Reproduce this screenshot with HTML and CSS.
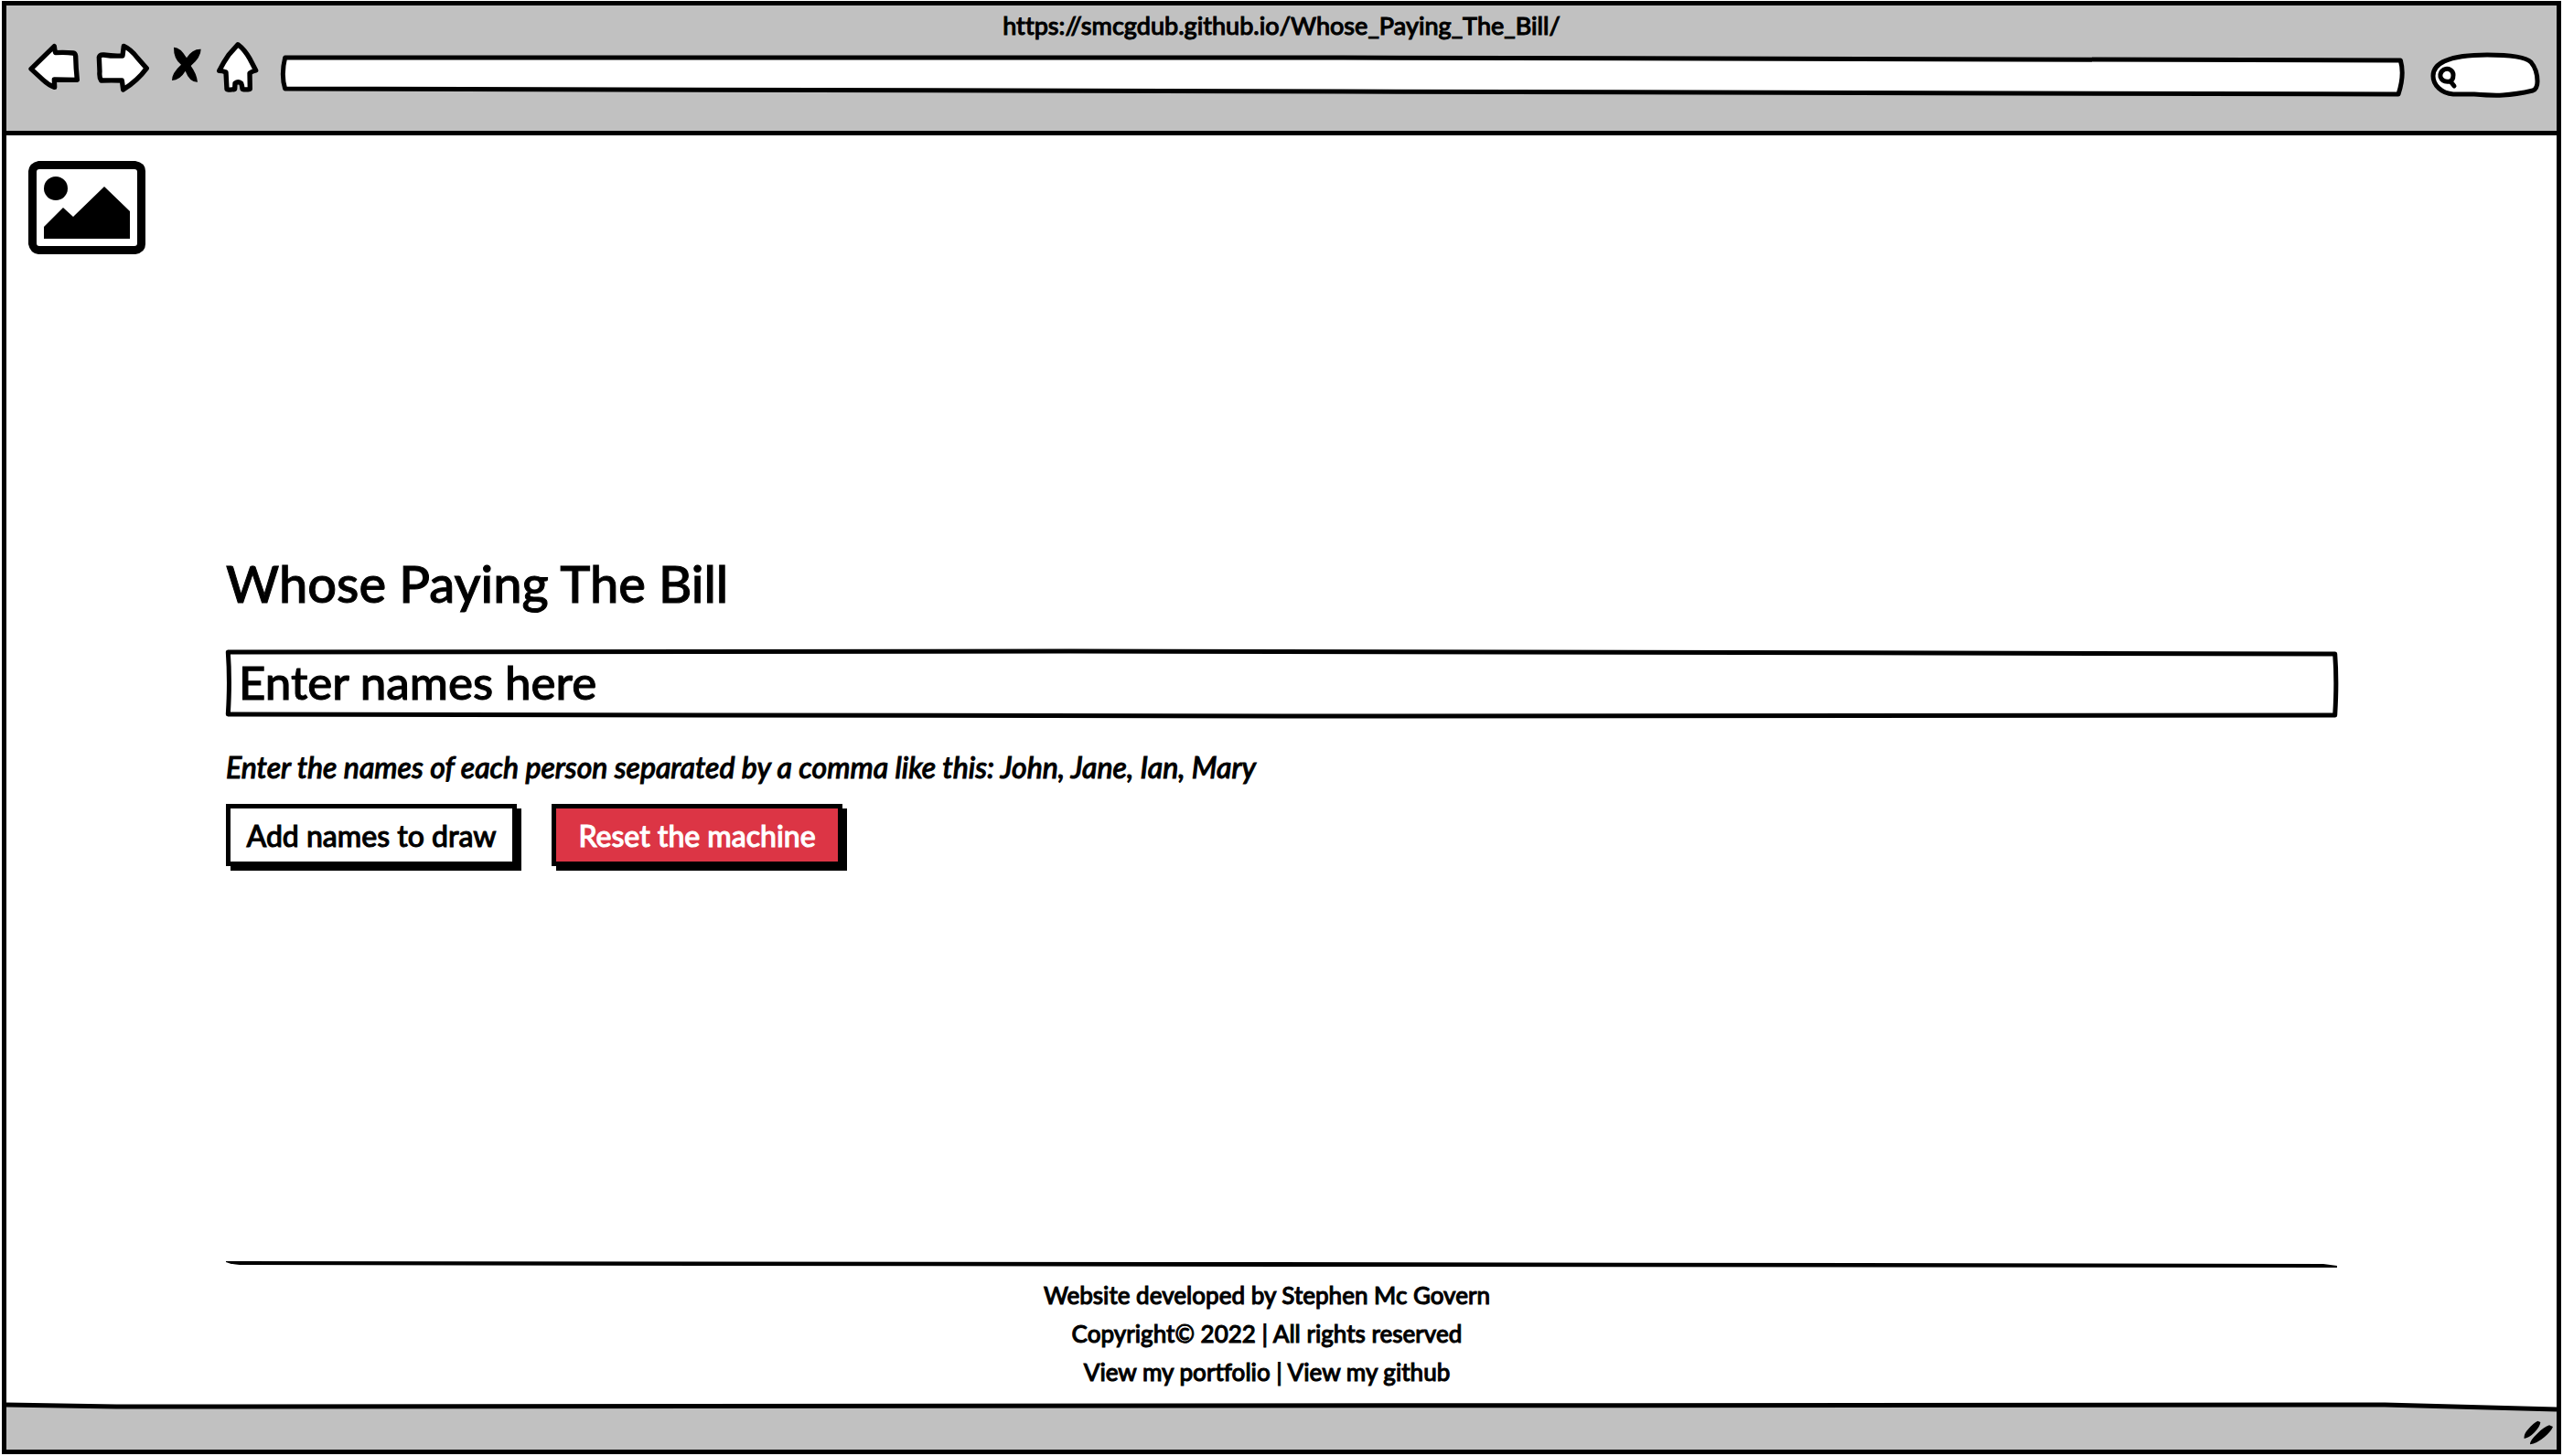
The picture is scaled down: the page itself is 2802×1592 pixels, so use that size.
FILE: index.html
```html
<!DOCTYPE html>
<html lang="en">
<head>
<meta charset="utf-8">
<meta name="viewport" content="width=device-width, initial-scale=1">
<title>Whose Paying The Bill</title>
<link rel="stylesheet" href="styles.css">
</head>
<body>
<div class="browser">
  <header class="chrome">
    <p class="page-url">https://smcgdub.github.io/Whose_Paying_The_Bill/</p>
    <div class="toolbar">
      <button class="tool tool-back" type="button" aria-label="Back">
        <svg width="56" height="56" viewBox="93 135 168 168"><path class="ink" d="M102 226 178 152Q179 164 182 173Q212 171 240 174Q247 175 248 184Q249 225 253 262Q218 261 178 261L179 286Q160 280 142 263Z"/></svg>
      </button>
      <button class="tool tool-forward" type="button" aria-label="Forward">
        <svg width="58" height="56" viewBox="315 135 174 168"><path class="ink" d="M325 188Q327 179 340 180Q372 185 402 183L406 151Q430 162 450 189L481 224Q450 266 404 294L400 264Q365 263 332 264Q325 255 327 235Z"/></svg>
      </button>
      <button class="tool tool-stop" type="button" aria-label="Stop">
        <svg width="33" height="56" viewBox="561 135 99 168"><path d="M570 155Q592 155 612 190Q630 160 659 161Q659 188 626 216Q645 242 648 269Q622 270 608 233Q590 263 564 264Q563 240 594 212Q569 193 570 155Z"/></svg>
      </button>
      <button class="tool tool-home" type="button" aria-label="Home">
        <svg width="46" height="56" viewBox="711 135 138 168"><path class="ink" d="M780 146Q802 162 820 194L839 231Q826 234 819 240L820 292Q805 295 795 292Q794 280 791 273Q781 265 771 273L770 292Q757 296 744 293L741 237Q730 232 719 232Q732 206 750 180Z"/></svg>
      </button>
      <div class="sketch address">
        <svg class="outline" viewBox="0 0 1000 46" preserveAspectRatio="none" aria-hidden="true"><path d="M2 3 500 3 998 6Q1000 22 997 43L500 40 2 37Q0 22 2 3Z"/></svg>
        <input class="field" type="text" aria-label="Address">
      </div>
      <div class="sketch search">
        <svg class="outline" viewBox="0 0 120 50" preserveAspectRatio="none" aria-hidden="true"><path d="M25 46C12 45 3 36 3 26C3 14 16 3 62 3C88 3 104 5 110 11C115 17 117 25 117 32Q117 40 112 42C86 48 72 48 48 46Z"/><path d="M15 19C20 17 25 20 25 25Q25 31 21 32Q13 33 11 27Q10 22 15 19ZM22 32 26 37"/></svg>
        <input class="field" type="search" aria-label="Search">
      </div>
    </div>
  </header>
  <div class="page">
    <svg class="logo" width="128" height="102" viewBox="0 0 128 102" role="img" aria-label="Logo"><path fill-rule="evenodd" d="M11 0H117Q128 2 128 11V91Q128 100 117 102H11Q2 101 0 91V11Q1 2 11 0ZM12 9Q9 9 9 12V90Q9 93 12 93H116Q119 93 119 90V12Q119 9 116 9Z"/><circle cx="30" cy="30" r="13"/><path d="M17 72 38 51 49 61 83 28 111 55V85H17Z"/></svg>
    <main class="content">
      <h1 class="title">Whose Paying The Bill</h1>
      <form class="draw">
        <div class="sketch names">
          <svg class="outline" viewBox="0 0 1000 75" preserveAspectRatio="none" aria-hidden="true"><path d="M1 3 400 2 999 5Q1000 35 999 72L500 73 1 71Q2 35 1 3Z"/></svg>
          <input class="field" type="text" placeholder="Enter names here" aria-label="Names" aria-describedby="hint">
        </div>
        <p class="hint" id="hint">Enter the names of each person separated by a comma like this: John, Jane, Ian, Mary</p>
        <div class="actions">
          <button class="action" type="button">Add names to draw</button>
          <button class="action action-reset" type="reset">Reset the machine</button>
        </div>
      </form>
    </main>
    <footer class="footer">
      <svg class="rule" viewBox="0 0 2309 8" preserveAspectRatio="none" aria-hidden="true"><path d="M0 0 1150 1 2294 3 2309 5V7L1150 6 15 4Q4 3 0 1Z"/></svg>
      <p>Website developed by Stephen Mc Govern</p>
      <p>Copyright© 2022 | All rights reserved</p>
      <p><a href="#portfolio">View my portfolio</a> | <a href="#github">View my github</a></p>
    </footer>
  </div>
  <div class="status">
    <svg class="status-edge" viewBox="0 0 2788 52" preserveAspectRatio="none" aria-hidden="true"><path class="fill" d="M0 3 120 5 2600 3 2788 8V52H0Z"/><path class="line" d="M0 3 120 5 2600 3 2788 8"/></svg>
    <svg class="grip" width="34" height="28" viewBox="776 580 102 84" aria-hidden="true"><path d="M778 640Q775 626 790 610Q807 589 822 582L831 586Q831 598 812 619Q796 636 778 640ZM797 659Q796 646 820 624Q843 601 860 596L872 601Q866 616 845 634Q818 657 797 659Z"/></svg>
  </div>
</div>
</body>
</html>
```
FILE: styles.css
```css
* {
  box-sizing: border-box;
}

body {
  display: flow-root;
  margin: 0;
  background: #fff;
  color: #000;
  font-family: Lato, "Liberation Sans", sans-serif;
  font-weight: 500;
  font-variant-ligatures: none;
  -webkit-text-stroke: 1px currentColor;
}

p,
h1 {
  margin: 0;
  font-weight: inherit;
}

button,
input {
  font: inherit;
  color: inherit;
}

a {
  color: inherit;
  text-decoration: none;
}

svg {
  display: block;
}

.browser {
  display: flex;
  flex-direction: column;
  min-height: calc(100vh - 3px);
  margin: 1px 2px 2px;
  border: 5px solid #000;
}

.chrome {
  background: #c1c1c1;
  border-bottom: 5px solid #000;
  padding: 6px 18px 36px 24px;
}

.page-url {
  padding-right: 6px;
  font-size: 27px;
  line-height: 32px;
  text-align: center;
}

.toolbar {
  display: flex;
  align-items: flex-start;
}

.tool {
  flex: none;
  padding: 1px 0 0;
  border: 0;
  background: none;
}

.tool-forward {
  margin-left: 18px;
}

.tool-stop {
  margin-left: 24px;
}

.tool-home {
  margin-left: 17px;
}

.ink {
  fill: #fff;
  stroke: #000;
  stroke-width: 16px;
  stroke-linejoin: round;
}

.sketch {
  position: relative;
}

.outline {
  position: absolute;
  inset: 0;
  width: 100%;
  height: 100%;
  overflow: visible;
}

.outline path {
  fill: #fff;
  stroke: #000;
  stroke-width: 5px;
  stroke-linejoin: round;
  stroke-linecap: round;
  vector-effect: non-scaling-stroke;
}

.field {
  position: relative;
  display: block;
  width: 100%;
  height: 100%;
  padding: 0 14px 4px;
  border: 0;
  outline: 0;
  background: none;
}

.field::placeholder {
  color: #000;
  opacity: 1;
}

.address {
  flex: 1;
  height: 46px;
  margin: 16px 28px 0 24px;
}

.search {
  width: 120px;
  height: 50px;
  margin-top: 13px;
}

.search .field {
  padding-left: 36px;
}

.page {
  flex: 1;
  display: flex;
  flex-direction: column;
  padding-bottom: 12px;
}

.logo {
  margin: 28px 0 0 24px;
}

.content {
  padding: 0 240px;
  margin-top: 324px;
}

.title {
  font-size: 56px;
  line-height: 72px;
}

.names {
  height: 75px;
  margin-top: 36px;
  font-size: 51px;
}

.hint {
  margin-top: 34px;
  font-size: 32px;
  line-height: 40px;
  font-style: italic;
}

.actions {
  display: flex;
  gap: 38px;
  margin-top: 20px;
}

.action {
  width: 318px;
  height: 68px;
  padding: 0;
  border: 5px solid #000;
  background: #fff;
  box-shadow: 5px 5px 0 #000;
  font-size: 32px;
  font-variant-ligatures: none;
  -webkit-text-stroke: inherit;
}

.action-reset {
  background: #dc3545;
  color: #fff;
}

.footer {
  margin-top: auto;
  padding: 0 240px;
  font-size: 26px;
  line-height: 42px;
  text-align: center;
}

.footer p {
  padding-right: 32px;
}

.rule {
  width: 100%;
  height: 8px;
  margin-bottom: 8px;
}

.status {
  position: relative;
  display: flex;
  justify-content: flex-end;
  align-items: center;
  height: 52px;
  padding: 16px 2px 0 0;
}

.status-edge {
  position: absolute;
  inset: 0;
  width: 100%;
  height: 100%;
}

.status-edge .fill {
  fill: #c1c1c1;
}

.status-edge .line {
  fill: none;
  stroke: #000;
  stroke-width: 5px;
  vector-effect: non-scaling-stroke;
}

.grip {
  position: relative;
}
```
